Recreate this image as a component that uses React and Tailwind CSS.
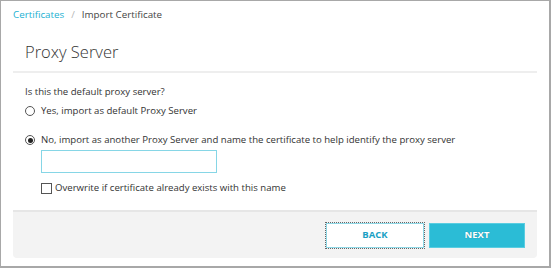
export default function App() {
  return (
    <div className="h-[269px] w-[552px] bg-white font-['Open_Sans',sans-serif] text-[#333]">
      <div className="flex h-[268px] w-[551px] flex-col border-t border-l border-r-2 border-b-2 border-[#a8a8a8] px-3">
        {/* Breadcrumb */}
        <div className="mt-[6px] flex items-center text-[9.8px] leading-[16px]">
          <span className="text-[#1ab1d2]">Certificates</span>
          <span className="mx-[7px] text-[#b5b5b5]">/</span>
          <span className="text-[#444]">Import Certificate</span>
        </div>

        {/* Heading */}
        <h1 className="mt-[17px] pl-3 text-[16.5px] font-light leading-[24px] text-[#333]">Proxy Server</h1>
        <div className="mt-[7px] h-[2px] bg-[#eeeeee]" />

        {/* Body */}
        <div className="pl-3 text-[9.6px] leading-[14px]">
          <p className="mt-[12px]">Is this the default proxy server?</p>

          <label className="mt-[5px] flex items-center gap-[6px]">
            <span className="flex h-[10px] w-[10px] items-center justify-center rounded-full border border-[#555] bg-white" />
            <span>Yes, import as default Proxy Server</span>
          </label>

          <label className="mt-[15px] flex items-center gap-[6px]">
            <span className="flex h-[10px] w-[10px] items-center justify-center rounded-full border border-[#555] bg-white">
              <span className="h-[5px] w-[5px] rounded-full bg-[#222]" />
            </span>
            <span>No, import as another Proxy Server and name the certificate to help identify the proxy server</span>
          </label>

          <div className="ml-4 mt-[3px] h-[23px] w-[176px] border border-[#86d6e6] bg-white" />

          <label className="ml-4 mt-[8px] flex items-center gap-[3px]">
            <span className="h-[11px] w-[11px] border border-[#555] bg-white" />
            <span>Overwrite if certificate already exists with this name</span>
          </label>
        </div>

        {/* Footer */}
        <div className="mt-[15px] flex h-[48px] items-center justify-end gap-[5px] rounded-b-[4px] border-t-2 border-[#e6e6e6] bg-[#f3f3f3] pr-3">
          <button
            type="button"
            className="h-[25px] w-[98px] border border-[#8fd8e6] bg-white text-[9.5px] font-bold text-[#1a9fc4] outline outline-1 outline-offset-0 outline-dotted outline-[#666]"
          >
            BACK
          </button>
          <button
            type="button"
            className="h-[25px] w-[96px] border border-[#59cde1] bg-[#2bbcd6] text-[9.5px] font-bold text-white [text-shadow:0_0_1px_#1a7f95]"
          >
            NEXT
          </button>
        </div>
      </div>
    </div>
  )
}
